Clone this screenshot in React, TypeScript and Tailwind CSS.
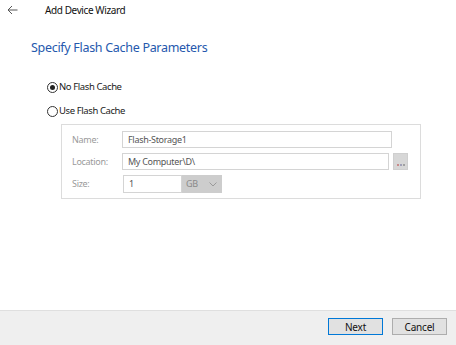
import React from 'react';

const font = { fontFamily: '"Segoe UI", "Noto Sans", sans-serif' };

const Radio: React.FC<{ checked?: boolean; label: string }> = ({ checked, label }) => (
  <label className="flex items-center h-[16px] text-[9.5px] text-[#1a1a1a] tracking-[-0.4px]">
    <span className="w-[11px] h-[11px] rounded-full border border-[#333] flex items-center justify-center bg-white">
      {checked && <span className="w-[5px] h-[5px] rounded-full bg-[#222]" />}
    </span>
    <span className="ml-[1px]">{label}</span>
  </label>
);

const App: React.FC = () => {
  return (
    <div className="w-[456px] h-[345px] bg-white flex flex-col text-[#222]" style={font}>
      <div className="h-[20px] flex items-center">
        <svg className="ml-[7px]" width="11" height="10" viewBox="0 0 11 10" fill="none" stroke="#555" strokeWidth="1">
          <path d="M10.5 5H1M5 1L1 5l4 4" />
        </svg>
        <span className="ml-[27px] text-[10px] tracking-[-0.4px] text-[#111]">Add Device Wizard</span>
      </div>

      <div className="flex-1 flex flex-col">
        <h1 className="mt-[18px] ml-[31px] text-[12.5px] leading-[20px] tracking-[-0.3px] text-[#2558ad]">
          Specify Flash Cache Parameters
        </h1>

        <div className="mt-[21px] ml-[47px] flex flex-col gap-[8px]">
          <Radio checked label="No Flash Cache" />
          <Radio label="Use Flash Cache" />
        </div>

        <div className="mt-[5px] ml-[61px] w-[360px] h-[75px] border border-[#dcdcdc] flex flex-col pt-[6px] gap-[5px] text-[9px] tracking-[-0.3px] text-[#9a9a9a]">
          <div className="flex items-center h-[17px]">
            <span className="w-[60px] pl-[10px]">Name:</span>
            <div className="w-[270px] h-[17px] border border-[#d4d4d4] bg-white pl-[5px] flex items-center text-[#555]">
              Flash-Storage1
            </div>
          </div>
          <div className="flex items-center h-[17px]">
            <span className="w-[60px] pl-[10px]">Location:</span>
            <div className="w-[267px] h-[17px] border border-[#d4d4d4] bg-white pl-[5px] flex items-center text-[#555]">
              My Computer\D\
            </div>
            <div className="ml-[4px] w-[15px] h-[17px] bg-[#d7d7d7] border border-[#cfcfcf] flex items-end justify-center pb-[3px] gap-[1px]">
              <span className="w-[2px] h-[2px] bg-[#c98a8a]" />
              <span className="w-[2px] h-[2px] bg-[#a0a0b8]" />
              <span className="w-[2px] h-[2px] bg-[#a0a0a0]" />
            </div>
          </div>
          <div className="flex items-center h-[18px]">
            <span className="w-[61px] pl-[10px]">Size:</span>
            <div className="w-[59px] h-[18px] border border-[#d4d4d4] bg-white pl-[5px] flex items-center text-[#555]">
              1
            </div>
            <div className="w-[40px] h-[18px] bg-[#cdcdcd] flex items-center justify-between pl-[4px] pr-[5px] text-[#8a8a8a]">
              <span>GB</span>
              <svg width="8" height="5" viewBox="0 0 8 5" fill="none" stroke="#9a9a9a" strokeWidth="1">
                <path d="M0.5 0.5L4 4l3.5-3.5" />
              </svg>
            </div>
          </div>
        </div>
      </div>

      <div className="h-[35px] bg-[#efefef] border-t border-[#dfdfdf] flex items-start justify-end gap-[9px] pt-[7px] pr-[9px] text-[10px] tracking-[-0.2px] text-[#111]">
        <button className="w-[55px] h-[17px] bg-[#e1e1e1] border border-[#0078d7] leading-none">Next</button>
        <button className="w-[55px] h-[17px] bg-[#e1e1e1] border border-[#adadad] leading-none">Cancel</button>
      </div>
    </div>
  );
};

export default App;
